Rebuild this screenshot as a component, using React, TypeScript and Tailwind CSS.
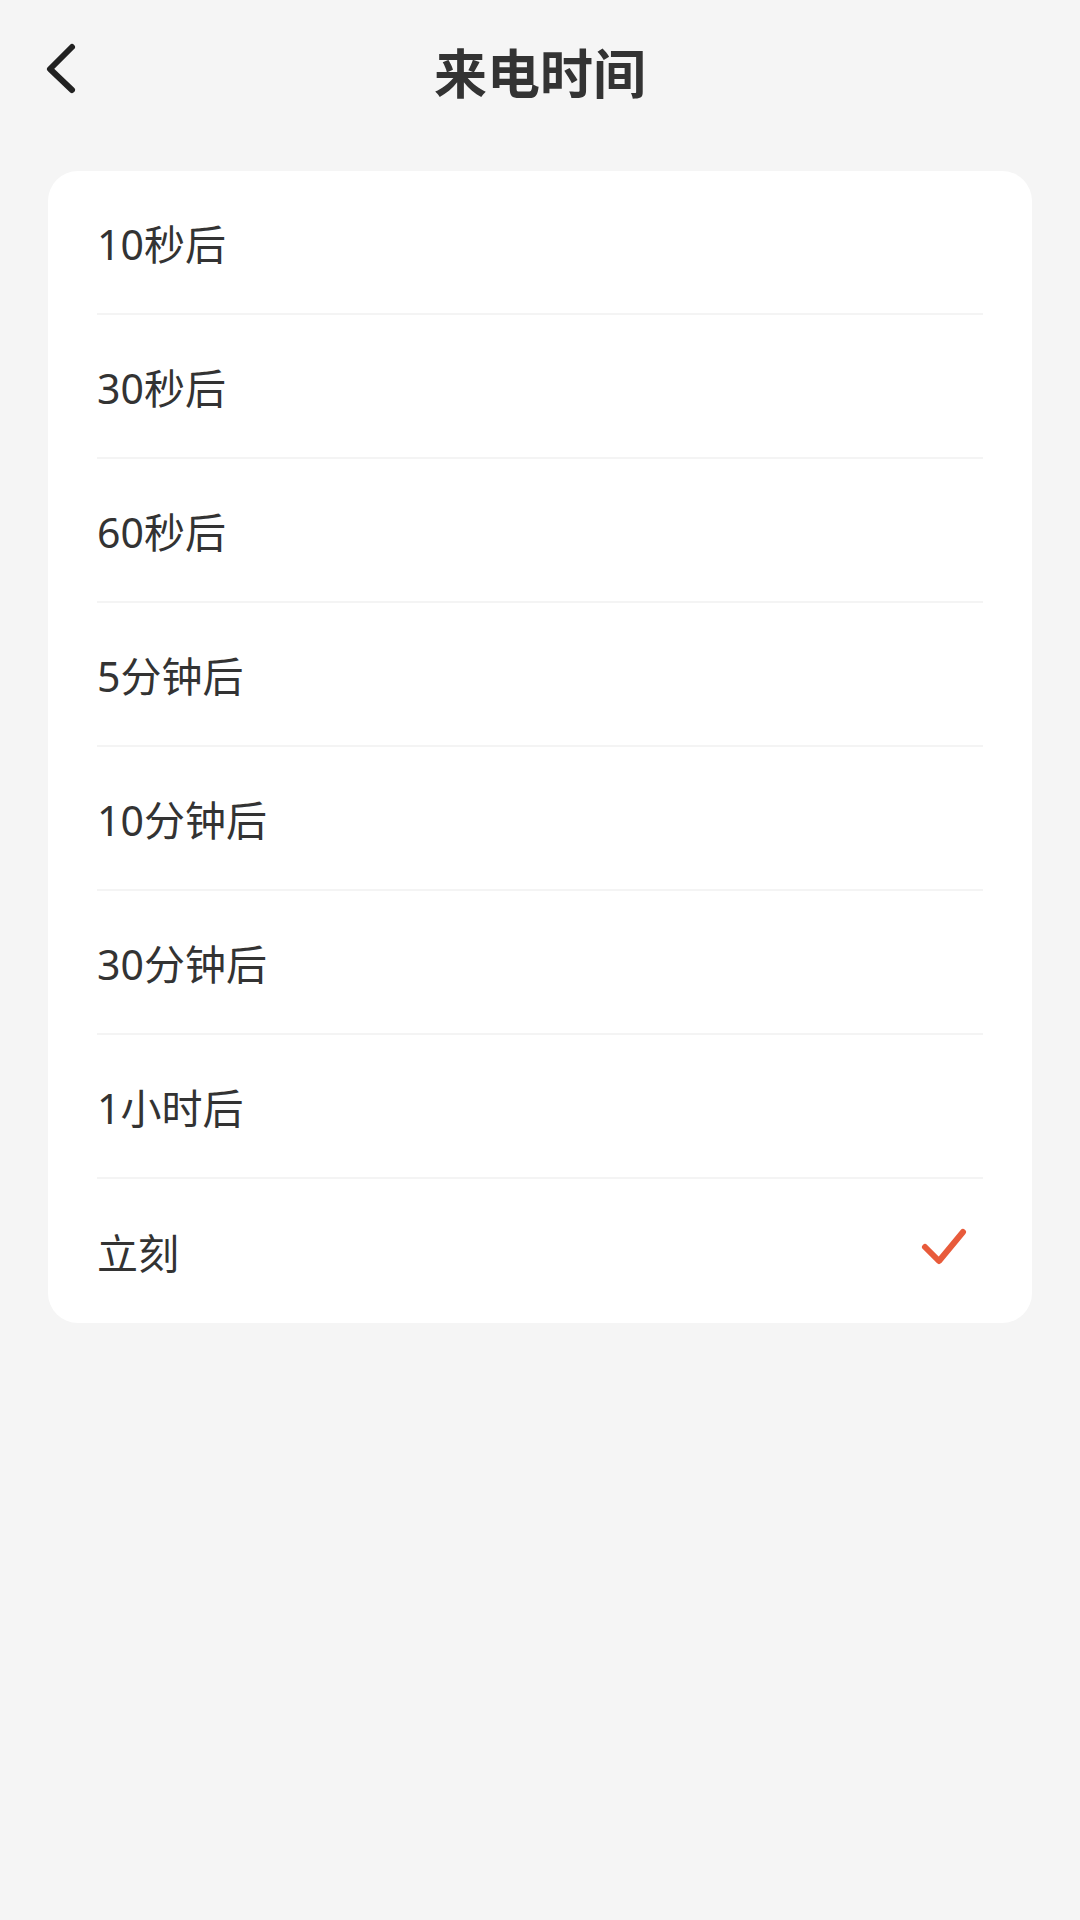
import React from "react";

const items = ["10秒后", "30秒后", "60秒后", "5分钟后", "10分钟后", "30分钟后", "1小时后", "立刻"];

export default function App() {
  const selected = "立刻";
  return (
    <div
      className="w-[1080px] h-[1920px] bg-[#f5f5f5] flex flex-col"
      style={{ fontFamily: '"Noto Sans", "Noto Sans CJK SC", sans-serif' }}
    >
      <div className="relative h-[146px] flex items-center justify-center shrink-0">
        <svg
          className="absolute left-[40px] top-[38px]"
          width="44"
          height="62"
          viewBox="0 0 44 62"
          fill="none"
        >
          <path d="M32 9 L10 31 L32 52" stroke="#222222" strokeWidth="6" strokeLinecap="round" strokeLinejoin="round" />
        </svg>
        <div className="text-[53px] font-bold text-[#333333] leading-none">来电时间</div>
      </div>
      <div className="mx-[48px] mt-[25px] bg-white rounded-[30px] px-[49px]">
        {items.map((t, i) => (
          <div
            key={t}
            className={`h-[144px] flex items-center justify-between ${i < items.length - 1 ? "border-b-2 border-[#f4f4f4]" : ""}`}
          >
            <span className="text-[41px] text-[#333333] leading-none pt-[4px]">{t}</span>
            {t === selected && (
              <svg width="60" height="50" viewBox="0 0 60 50" fill="none" className="mr-[6px]">
                <path d="M8 21 L22 35 L46 6" stroke="#e85b3b" strokeWidth="6" strokeLinecap="round" strokeLinejoin="round" />
              </svg>
            )}
          </div>
        ))}
      </div>
    </div>
  );
}
